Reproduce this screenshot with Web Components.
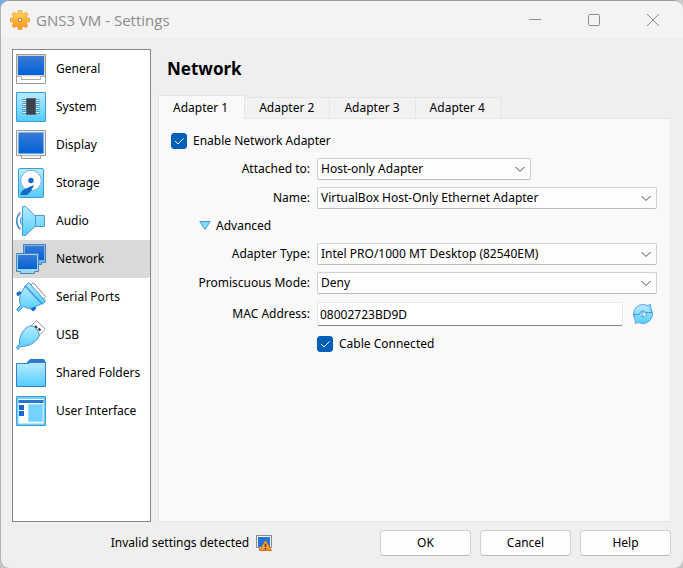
<!DOCTYPE html>
<html lang="en">
<head>
<meta charset="utf-8">
<title>GNS3 VM - Settings</title>
<style>
html, body { margin: 0; height: 100%; }
body {
  background: linear-gradient(90deg, #6fb1e2 0 24%, #a3a3a3 24% 98%, #cdcdcd 98%) top / 100% 12px no-repeat, #c6c6c6;
  font: 12px/16px "Noto Sans", "Open Sans", sans-serif;
  color: #000;
}
</style>
</head>
<body>
<settings-window></settings-window>

<script>
const define = (name, html, setup) => {
  const template = document.createElement('template');
  template.innerHTML = html;
  customElements.define(name, class extends HTMLElement {
    constructor() {
      super();
      this.attachShadow({ mode: 'open' }).append(template.content.cloneNode(true));
    }
    connectedCallback() {
      if (setup && !this.ready) { this.ready = true; setup(this, this.shadowRoot); }
    }
  });
};

const GRADIENTS = `<defs>
  <linearGradient id="c" x2="0" y2="1"><stop stop-color="#b8ecff"/><stop offset="1" stop-color="#52cdff"/></linearGradient>
  <linearGradient id="b" x2="0" y2="1"><stop stop-color="#3a7ad6"/><stop offset="1" stop-color="#0062d6"/></linearGradient>
  <linearGradient id="o" x2="0" y2="1"><stop stop-color="#ffd75e"/><stop offset="1" stop-color="#f7931e"/></linearGradient>
</defs>`;

const ICONS = {
  general: [30, `<path d="M.5.5h29v29H.5z" fill="#fff" stroke="#999"/><path d="M1.500 1.500h27v20h-27z" fill="#fff" stroke="#d4d4d4"/><path d="M2 2h26v19H2z" fill="url(#b)"/><path d="M1 22.500h4.500v3h19v-3H29" fill="none" stroke="#aaa"/><path d="M5 22h20" stroke="#ddd"/>`],
  system: [30, `<path d="M.5.5h29v29H.5z" fill="url(#c)" stroke="#3a9be0"/><path d="M6.500 8.500h17M6.500 12.500h17M6.500 16.500h17M6.500 20.500h17" stroke="#4a9ac8" stroke-width="3"/><path d="M7 8.500h16M7 12.500h16M7 16.500h16M7 20.500h16" stroke="#fff"/><path d="M10.500 6.500h9v16h-9z" fill="#3a4250" stroke="#5b6472"/>`],
  display: [30, `<path d="M.5.5h29v25h-5v3h-19v-3h-5z" fill="#f4f4f4" stroke="#999"/><path d="M2 2h26v22H2z" fill="url(#b)" stroke="#d6e6f6"/><path d="M6 25.500h18" stroke="#bbb"/>`],
  storage: [30, `<rect x="2.500" y=".5" width="25" height="29" rx="1.500" fill="url(#c)" stroke="#3a9be0"/><circle cx="15" cy="12.500" r="10.300" fill="#fff" stroke="#79aee2"/><path d="M18 17c-2 1-10 4-12 6-2 2-1.500 4 0 4h4.500c3-1 6-6 7.500-10z" fill="#1769c7"/><circle cx="15" cy="12.500" r="2.700" fill="#1769c7"/>`],
  audio: [30, `<path d="M4.500 6.500C-.5 11-.5 19 4.500 23.500" fill="none" stroke="#3381cc" stroke-width="1.500"/><path d="M6.500 10.500c-3 3-3 6 0 9z" fill="#8bdcff" stroke="#4c97dd"/><path d="M6.500.5h3l9.500 9h9.500v11H19l-9.500 9h-3z" fill="url(#c)" stroke="#4c97dd"/><path d="M19.500 10v10" stroke="#4c97dd"/>`],
  network: [30, `<path d="M7.500.5h22v18h-4v2h-15v-2h-3z" fill="#72b7ed" stroke="#4b83b4"/><path d="M9 2h19v14H9z" fill="url(#b)"/><path d="M.5 9.500h22v18h-4v2h-14v-2h-4z" fill="#9fd8fc" stroke="#4b83b4"/><path d="M2 11h19v14H2z" fill="url(#b)"/>`],
  serial: [30, `<path d="M14 3.500 17.500.8l12 13.700-3 4z" fill="#fff" stroke="#888"/><path d="M9.500 3.500 13 .8l16.500 18.500-3.500 3z" fill="url(#c)" stroke="#3a8fdd"/><path d="M9.500 3.500 26 21.500l-3 1.500-3.500 1.500c-5 3.500-10 1.500-12-.5L2.500 29.500.8 27.500l4-4.500c-2-3-1-7-.3-11z" fill="url(#c)" stroke="#3a8fdd"/><path d="m.8 11 3-1.500 1 1.500-3 3zM15 27l4-2 .5 2-2.500 2z" fill="#1769c7" stroke="#1769c7"/><path d="m8.500 4 17.500 18" stroke="#3a8fdd"/>`],
  usb: [30, `<path d="m14.500 6.500 6-6 8.800 8.800-6 6z" fill="#fff" stroke="#999"/><path d="m19 6 2 2M22.500 8.500l2 2" stroke="#333" stroke-width="2.200"/><path d="M12.500 6.500c3-1.500 6 0 8 2.500s3.500 5.500 2 8c-3 5.500-9 9.500-18 9.500L2 29.500l-1.500-2L3.500 24c-.5-8 4-15 9-17.500z" fill="url(#c)" stroke="#3a8fdd"/>`],
  folder: [30, `<path d="M11 5 14 1.500h14L29.500 5z" fill="#2d78d2" stroke="#2d78d2"/><path d="M.5 5.500h12l2-1h15v24H.5z" fill="url(#c)" stroke="#3381cc"/>`],
  interface: [30, `<path d="M.5.5h29v29H.5z" fill="#6fd0fa" stroke="#3a9be0"/><path d="M2.500 3h25v24.500h-25z" fill="#fff"/><path d="M2.500 4h25v3h-25z" fill="#2b78d4"/><path d="M3 9h5v5H3zM3 15h5v5H3z" fill="#1769d0"/><path d="M12.500 8.500h14v17h-14z" fill="#73d2ff" stroke="#9adfff"/>`],
  gear: [20, `<path d="M8.300.5h3.400l.5 2.700 1.400.5L16 2.200l2 2-1.600 2.300.6 1.300 2.600.5v3.400l-2.600.5-.6 1.400 1.600 2.200-2.100 2.100-2.200-1.600-1.500.6-.5 2.600H8.300l-.5-2.600-1.500-.6L4 17.900l-2-2.100 1.500-2.200-.5-1.400-2.600-.5V8.300L3 7.800l.5-1.300L2 4.200l2-2 2.300 1.500 1.500-.5z" fill="url(#o)" stroke="#ef9d3e" stroke-width=".8"/><circle cx="10" cy="10" r="1.800" fill="#f4f4f4" stroke="#c77a20"/>`],
  warning: [16, `<path d="M.5.5h15v12h-3v2h-9v-2h-3z" fill="#f5f5f5" stroke="#888"/><path d="M2 2h12v10H2z" fill="#2273d8"/><path d="M9.500 5.500 15.500 15.500h-12z" fill="url(#o)" stroke="#e0661c" stroke-linejoin="round"/><path d="M9.500 8.500V12M9.500 13v1.500" stroke="#4a2b00" stroke-width="1.500"/>`],
  refresh: [20, `<circle cx="10" cy="10" r="9.500" fill="url(#c)" stroke="#5aa5e4"/><path d="m14.500 1.500 3-1 1 8M5.500 18.500l-3 1-1-8" fill="#7cd8ff" stroke="#5aa5e4"/><path d="M.5 10.500h5.700C6.500 8 9 6.500 11.500 7.500l.5 1h7.500M13.800 9.500C13.500 12 11 13.500 8.500 12.500" fill="none" stroke="#4c97dd"/><path d="m8 8.500 2.500 1-1 2 2.500 1 1-2.500-1.500-1.500z" fill="#f6fbff" stroke="#7d9ab5" stroke-width=".5"/>`],
  triangle: [12, `<path d="M.8 1.500h10.400L6 9.500z" fill="#82dcff" stroke="#4697df"/>`],
  minimize: [12, `<path d="M0 5.500h12" stroke="#8c8c8c"/>`],
  maximize: [12, `<rect x=".5" y=".5" width="11" height="11" rx="1" fill="none" stroke="#8c8c8c"/>`],
  close: [12, `<path d="m0 0 12 12M12 0 0 12" stroke="#8c8c8c"/>`],
  chevron: [10, `<path d="m.5 3 4.500 4.500L9.500 3" fill="none" stroke="#4a4a4a"/>`],
  check: [16, `<path d="m4 8 3 3 5.500-5.500" fill="none" stroke="#fff"/>`]
};

define('ui-icon', `<style>:host { display: block; flex: none; } svg { display: block; }</style>`, (el, root) => {
  const [size, body] = ICONS[el.getAttribute('name')];
  root.innerHTML += `<svg width="${size}" height="${size}" viewBox="0 0 ${size} ${size}" aria-hidden="true">${GRADIENTS}${body}</svg>`;
});

define('title-bar', `<style>
  :host { display: flex; align-items: center; height: 37px; padding: 0 1px 0 9px; background: #f3f3f3; color: #8c8c8c; }
  h1 { flex: 1; margin: 0 0 0 6px; font: 15px/20px "Open Sans", "Noto Sans", sans-serif; }
  button { display: grid; place-content: center; width: 59px; height: 37px; border: 0; padding: 0; background: none; }
</style>
<ui-icon name="gear"></ui-icon><h1><slot></slot></h1>
<button aria-label="Minimize"><ui-icon name="minimize"></ui-icon></button>
<button aria-label="Maximize"><ui-icon name="maximize"></ui-icon></button>
<button aria-label="Close"><ui-icon name="close"></ui-icon></button>`);

define('nav-item', `<style>
  :host { display: block; }
  button { display: flex; align-items: center; gap: 10px; width: 100%; height: 38px; border: 0; border-radius: 2px; padding: 0 3px;
    background: none; font: inherit; line-height: 18px; color: inherit; text-align: left; white-space: nowrap; }
  :host([selected]) button { background: #d9d9d9; }
</style><button><slot></slot></button>`, (el, root) => {
  const icon = document.createElement('ui-icon');
  icon.setAttribute('name', el.getAttribute('icon'));
  root.querySelector('button').prepend(icon);
  if (el.hasAttribute('selected')) root.querySelector('button').setAttribute('aria-current', 'page');
});

define('tab-button', `<style>
  :host { display: block; margin-bottom: 1px; }
  :host([selected]) { margin-bottom: 0; z-index: 1; }
  button { height: 21px; border: 1px solid #e5e5e5; border-bottom: 0; border-left: 0; padding: 0 15px 0 14px;
    background: #f2f2f2; font: inherit; line-height: 20px; color: inherit; white-space: nowrap; }
  :host([selected]) button { height: 24px; border-left: 1px solid #e5e5e5; padding: 0 16px 0 14px; background: #f9f9f9; }
</style><button role="tab"><slot></slot></button>`, (el, root) =>
  root.querySelector('button').setAttribute('aria-selected', el.hasAttribute('selected')));

define('check-box', `<style>
  :host { display: block; }
  label { display: flex; align-items: center; gap: 6px; }
  .box { display: grid; }
  input, ui-icon { grid-area: 1 / 1; }
  input { appearance: none; width: 16px; height: 16px; margin: 0; border: 1px solid #005fb8; border-radius: 3px; background: #fff; }
  input:checked { background: #005fb8; }
  ui-icon { pointer-events: none; }
  input:not(:checked) + ui-icon { visibility: hidden; }
</style><label><span class="box"><input type="checkbox" checked><ui-icon name="check"></ui-icon></span><slot></slot></label>`);

const ROW = `
  :host { display: grid; grid-template-columns: 139px minmax(0, 1fr); column-gap: 7px; align-items: center; }
  label { text-align: right; white-space: nowrap; }`;

define('combo-field', `<style>${ROW}
  .combo { display: grid; align-items: center; }
  :host([compact]) .combo { width: 63%; }
  select, ui-icon { grid-area: 1 / 1; }
  select { appearance: none; width: 100%; height: 22px; border: 1px solid #d0d0d0; border-bottom-color: #b9b9b9; border-radius: 2px;
    padding: 0 24px 0 3px; background: #fdfdfd; font: inherit; color: inherit; }
  ui-icon { justify-self: end; margin-right: 6px; pointer-events: none; }
</style><label for="f"></label><div class="combo"><select id="f"><option></option></select><ui-icon name="chevron"></ui-icon></div>`, (el, root) => {
  root.querySelector('label').textContent = el.getAttribute('label');
  root.querySelector('option').textContent = el.getAttribute('value');
});

define('text-field', `<style>${ROW}
  div { display: flex; align-items: center; gap: 10px; padding-right: 4px; }
  input { flex: 1; min-width: 0; box-sizing: border-box; height: 24px; border: 1px solid #e6e6e6; border-bottom-color: #868686; border-radius: 2px;
    padding: 0 2px; background: #fff; font: inherit; color: inherit; }
  button { border: 0; padding: 0; background: none; }
</style><label for="f"></label><div><input id="f"><button aria-label="Generate new address"><ui-icon name="refresh"></ui-icon></button></div>`, (el, root) => {
  root.querySelector('label').textContent = el.getAttribute('label');
  root.querySelector('input').value = el.getAttribute('value');
});

define('push-button', `<style>
  :host { display: block; }
  button { width: 91px; height: 26px; border: 1px solid #d0d0d0; border-bottom-color: #bababa; border-radius: 4px; padding: 0;
    background: #fdfdfd; font: inherit; color: inherit; }
</style><button><slot></slot></button>`);

define('network-page', `<style>
  :host { display: flex; flex-direction: column; min-width: 0; }
  h2 { margin: 9px 0 0 9px; font-size: 17px; line-height: 22px; }
  .tabs { display: flex; align-items: flex-end; margin: 15px 0 -1px; }
  .panel { flex: 1; border: 1px solid #e5e5e5; background: #f9f9f9; padding: 14px 13px 12px 12px; }
  .first { margin-bottom: 9px; }
  .row { margin-top: 7px; }
  .mac { margin-top: 8px; }
  .cable { margin: 10px 0 0 146px; }
  .advanced { display: flex; align-items: center; gap: 5px; border: 0; margin: 9px 0 9px 28px; padding: 0; background: none; font: inherit; line-height: 16px; color: inherit; }
</style>
<h2>Network</h2>
<div class="tabs" role="tablist">
  <tab-button selected>Adapter 1</tab-button><tab-button>Adapter 2</tab-button><tab-button>Adapter 3</tab-button><tab-button>Adapter 4</tab-button>
</div>
<div class="panel" role="tabpanel">
  <check-box class="first">Enable Network Adapter</check-box>
  <combo-field compact label="Attached to:" value="Host-only Adapter"></combo-field>
  <combo-field class="row" label="Name:" value="VirtualBox Host-Only Ethernet Adapter"></combo-field>
  <button class="advanced" aria-expanded="true"><ui-icon name="triangle"></ui-icon>Advanced</button>
  <combo-field label="Adapter Type:" value="Intel PRO/1000 MT Desktop (82540EM)"></combo-field>
  <combo-field class="row" label="Promiscuous Mode:" value="Deny"></combo-field>
  <text-field class="mac" label="MAC Address:" value="08002723BD9D"></text-field>
  <check-box class="cable">Cable Connected</check-box>
</div>`);

define('settings-window', `<style>
  :host { display: flex; flex-direction: column; box-sizing: border-box; min-height: 100vh; overflow: hidden;
    border: 1px solid #b3b3b3; border-top-color: #999; border-right: 0; border-bottom: 0; border-radius: 9px; background: #efefef; }
  main { flex: 1; display: grid; grid-template-columns: 139px minmax(0, 1fr); gap: 7px; padding: 11px 12px 0 11px; }
  nav { border: 1px solid #828790; background: #fff; }
  footer { display: flex; align-items: center; gap: 9px; padding: 8px 12px 12px 11px; }
  .status { flex: 1; display: flex; align-items: center; justify-content: center; gap: 7px; }
</style>
<title-bar>GNS3 VM - Settings</title-bar>
<main>
  <nav aria-label="Settings">
    <nav-item icon="general">General</nav-item>
    <nav-item icon="system">System</nav-item>
    <nav-item icon="display">Display</nav-item>
    <nav-item icon="storage">Storage</nav-item>
    <nav-item icon="audio">Audio</nav-item>
    <nav-item icon="network" selected>Network</nav-item>
    <nav-item icon="serial">Serial Ports</nav-item>
    <nav-item icon="usb">USB</nav-item>
    <nav-item icon="folder">Shared Folders</nav-item>
    <nav-item icon="interface">User Interface</nav-item>
  </nav>
  <network-page></network-page>
</main>
<footer>
  <div class="status"><span>Invalid settings detected</span><ui-icon name="warning"></ui-icon></div>
  <push-button>OK</push-button><push-button>Cancel</push-button><push-button>Help</push-button>
</footer>`);
</script>
</body>
</html>
